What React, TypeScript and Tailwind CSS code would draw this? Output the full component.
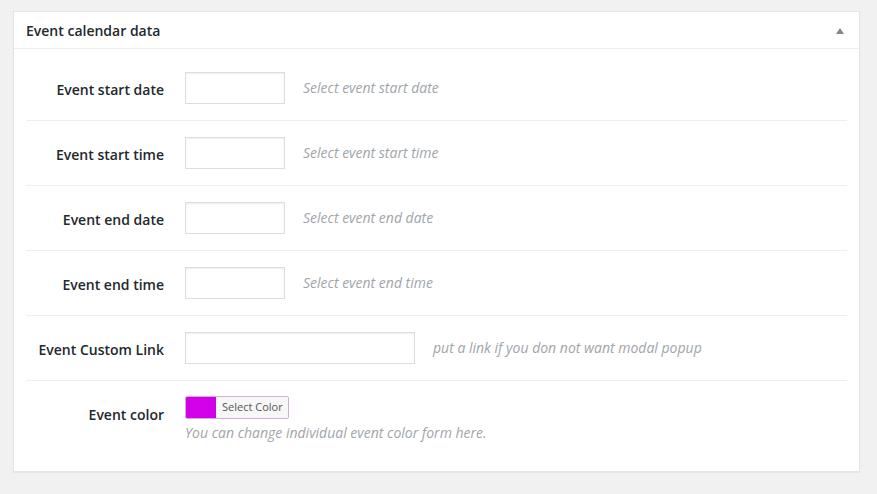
import React from "react";

const font = { fontFamily: '"Open Sans", "Liberation Sans", sans-serif' };

function Row({
  label,
  hint,
  wide,
  first,
}: {
  label: string;
  hint: string;
  wide?: boolean;
  first?: boolean;
}) {
  return (
    <div
      className={`flex items-start border-b border-[#eeeeee] ${
        first ? "pt-[23px]" : "pt-[16px]"
      } pb-[16px]`}
    >
      <div className="w-[138px] mt-[8px] text-right text-[14px] leading-[20px] font-semibold text-[#23282d]">
        {label}
      </div>
      <div className="ml-[21px] flex items-center">
        <div
          className={`${
            wide ? "w-[230px]" : "w-[100px]"
          } h-[32px] border border-[#dddddd] bg-white shadow-[inset_0_1px_2px_rgba(0,0,0,0.07)]`}
        />
        <div className="ml-[18px] text-[14px] leading-[20px] italic text-[#a0a5aa]">
          {hint}
        </div>
      </div>
    </div>
  );
}

export default function App() {
  return (
    <div className="min-h-[494px] w-[877px] bg-[#f1f1f1] pt-[11px]" style={font}>
      <div className="ml-[13px] w-[847px] border border-[#e5e5e5] bg-white shadow-[0_1px_1px_rgba(0,0,0,0.04)]">
        <div className="flex h-[37px] items-center justify-between border-b border-[#eeeeee] pl-[12px] pr-[14px]">
          <div className="text-[14px] font-semibold text-[#23282d]">Event calendar data</div>
          <svg width="10" height="6" viewBox="0 0 10 6" className="mt-[1px]">
            <polygon points="5,0 9,6 1,6" fill="#82878c" />
          </svg>
        </div>
        <div className="px-[12px] pb-[12px]">
          <Row first label="Event start date" hint="Select event start date" />
          <Row label="Event start time" hint="Select event start time" />
          <Row label="Event end date" hint="Select event end date" />
          <Row label="Event end time" hint="Select event end time" />
          <Row wide label="Event Custom Link" hint="put a link if you don not want modal popup" />
          <div className="flex items-start pt-[15px] pb-[16px]">
            <div className="w-[138px] mt-[9px] text-right text-[14px] leading-[20px] font-semibold text-[#23282d]">
              Event color
            </div>
            <div className="ml-[21px] flex flex-col">
              <div className="flex h-[23px] w-[104px] overflow-hidden rounded-[2px] border border-[#d9a8e3] bg-[#f7f7f7]">
                <div className="w-[30px] h-full bg-[#d000e8]" />
                <div className="flex flex-1 items-center pl-[6px] text-[11px] text-[#555555]">
                  Select Color
                </div>
              </div>
              <div className="mt-[4px] text-[14px] leading-[20px] italic text-[#a0a5aa]">
                You can change individual event color form here.
              </div>
            </div>
          </div>
        </div>
      </div>
    </div>
  );
}
